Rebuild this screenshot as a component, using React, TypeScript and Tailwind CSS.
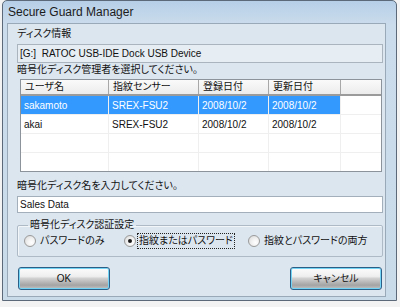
import React, { FC } from "react";

interface Row {
  user: string;
  sensor: string;
  created: string;
  updated: string;
}

const rows: Row[] = [
  { user: "sakamoto", sensor: "SREX-FSU2", created: "2008/10/2", updated: "2008/10/2" },
  { user: "akai", sensor: "SREX-FSU2", created: "2008/10/2", updated: "2008/10/2" },
];

const jp = "font-['Liberation_Sans','Noto_Sans_CJK_JP',sans-serif] text-[10px] leading-[14px] [font-feature-settings:'palt'] text-[#111] whitespace-nowrap";
const lat = "font-['Liberation_Sans',sans-serif] text-[10px] text-[#111] whitespace-nowrap";

const Radio: FC<{ label: string; checked?: boolean; focused?: boolean; width: string }> = ({ label, checked, focused, width }) => {
  return (
    <div className={`flex items-center ${width}`}>
      <span className="w-[12px] h-[12px] rounded-full border border-[#9a9a9a] bg-[radial-gradient(circle_at_65%_65%,#ffffff_0%,#f2f2f2_40%,#d6d6d6_100%)] flex items-center justify-center">
        {checked && <span className="w-[4px] h-[4px] rounded-full bg-[#1a1a1a]" />}
      </span>
      <span className={`${jp} ml-[1px] px-[1px] ${focused ? "outline-1 outline-dotted outline-[#222] ml-[2px]" : "ml-[3px]"}`}>{label}</span>
    </div>
  );
};

const Button: FC<{ label: string }> = ({ label }) => {
  return (
    <button className="w-[92px] h-[23px] rounded-[3px] border border-[#2c5f88] shadow-[inset_0_0_0_1px_#74d4f6] bg-[linear-gradient(to_bottom,#fcfcfc_0%,#eeeeee_40%,#d0d0d0_50%,#a4a4a4_82%,#c4c4c4_100%)] flex items-center justify-center">
      <span className={jp}>{label}</span>
    </button>
  );
};

const App: FC = () => {
  return (
    <div className="w-[400px] h-[307px] bg-[#f3f3f3] pl-[2px]">
      <div className="w-[395px] h-[301px] border border-[#5b6978] rounded-t-[5px] bg-[linear-gradient(to_bottom,#b6cfe7_0px,#cbdcec_24px,#c9dae9_100%)] flex flex-col">
        <div className="h-[22px] flex items-center pl-[5px]">
          <span className="font-['Liberation_Sans',sans-serif] text-[12px] text-[#1b1b1b]">Secure Guard Manager</span>
        </div>
        <div className="ml-[4px] mr-[10px] mb-[3px] flex-1 border border-[#9aa9b8] bg-[#dce6ef] pl-[9px] pr-[2px] pt-[3px] flex flex-col">
          <div className={jp}>ディスク情報</div>
          <div className="mt-[3px] h-[19px] border border-[#aab4be] bg-[#e6edf3] flex items-center pl-[2px]">
            <span className={lat}>[G:]&nbsp; RATOC USB-IDE Dock USB Device</span>
          </div>
          <div className={jp}>暗号化ディスク管理者を選択してください。</div>

          <div className="mt-[2px] ml-[3px] mr-[1px] h-[93px] border border-[#8d939a] bg-white overflow-hidden">
            <div className="grid grid-cols-[88px_90px_70px_72px_1fr] h-[16px] bg-[linear-gradient(to_bottom,#fafafa,#ececec)] border-b-2 border-[#9b9b9b]">
              {["ユーザ名", "指紋センサー", "登録日付", "更新日付", ""].map((h, i) => (
                <div key={i} className={`${jp} pl-[4px] flex items-center ${i < 4 ? "border-r border-[#a8a8a8]" : ""}`}>{h}</div>
              ))}
            </div>
            {[0, 1, 2, 3].map((r) => {
              const row = rows[r];
              const sel = r === 0;
              const cells = row ? [row.user, row.sensor, row.created, row.updated, ""] : ["", "", "", "", ""];
              return (
                <div key={r} className="grid grid-cols-[88px_90px_70px_72px_1fr] h-[19px] border-b border-[#efefef]">
                  {cells.map((c, i) => (
                    <div
                      key={i}
                      className={`${lat} pl-[3px] flex items-center ${i < 4 ? "border-r border-[#efefef]" : ""} ${sel && i < 4 ? "bg-[#3399ff] text-white border-[#7fbfff]" : ""}`}
                    >
                      {c}
                    </div>
                  ))}
                </div>
              );
            })}
          </div>

          <div className={`${jp} mt-[7px]`}>暗号化ディスク名を入力してください。</div>
          <div className="mt-[3px] h-[17px] border border-[#a3afbb] bg-white flex items-center pl-[2px]">
            <span className={lat}>Sales Data</span>
          </div>

          <fieldset className="mt-[5px] h-[39px] border border-[#aebbc7] rounded-[2px] shadow-[inset_1px_1px_0_#f2f6f9] px-[6px]">
            <legend className={`${jp} ml-[4px] px-[2px]`}>暗号化ディスク認証設定</legend>
            <div className="flex items-center pt-[2px]">
              <Radio label="パスワードのみ" width="w-[100px]" />
              <Radio label="指紋またはパスワード" width="w-[124px]" checked focused />
              <Radio label="指紋とパスワードの両方" width="flex-1" />
            </div>
          </fieldset>

          <div className="mt-[10px] flex justify-between pl-[1px] pr-[1px]">
            <Button label="OK" />
            <Button label="キャンセル" />
          </div>
        </div>
      </div>
    </div>
  );
};

export default App;
